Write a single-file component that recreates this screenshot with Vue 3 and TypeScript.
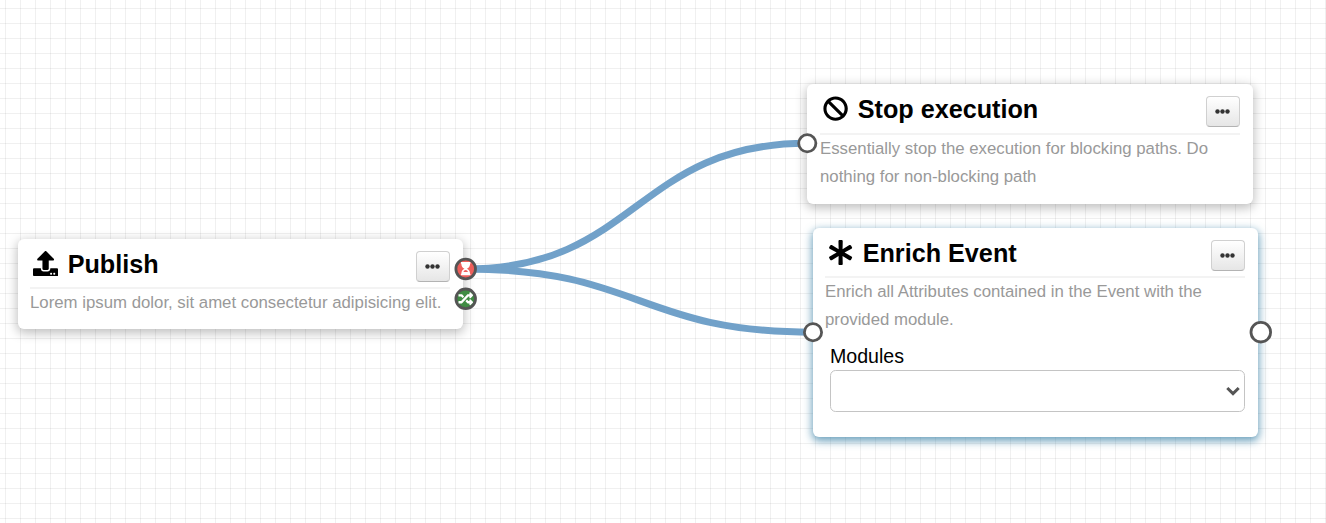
<script setup lang="ts">
interface NodeCard {
  id: string
  title: string
  icon: string
  text: string
  field?: string
}

const nodes: NodeCard[] = [
  {
    id: 'publish',
    title: 'Publish',
    icon: 'M296 384h-80c-13.3 0-24-10.7-24-24V192h-87.7c-17.8 0-26.7-21.5-14.1-34.1L242.3 5.7c7.5-7.5 19.8-7.5 27.3 0l152.2 152.2c12.6 12.6 3.7 34.1-14.1 34.1H320v168c0 13.3-10.7 24-24 24zm216-8v112c0 13.3-10.7 24-24 24H24c-13.3 0-24-10.7-24-24V376c0-13.3 10.7-24 24-24h136v8c0 30.9 25.1 56 56 56h80c30.9 0 56-25.1 56-56v-8h136c13.3 0 24 10.7 24 24zm-124 88c0-11-9-20-20-20s-20 9-20 20 9 20 20 20 20-9 20-20zm64 0c0-11-9-20-20-20s-20 9-20 20 9 20 20 20 20-9 20-20z',
    text: 'Lorem ipsum dolor, sit amet consectetur adipisicing elit.',
  },
  {
    id: 'stop',
    title: 'Stop execution',
    icon: 'M256 8C119.034 8 8 119.033 8 256s111.034 248 248 248 248-111.034 248-248S392.967 8 256 8zm130.108 117.892c65.448 65.448 70 165.481 20.677 235.637L150.47 105.216c70.204-49.356 170.226-44.735 235.638 20.676zM125.892 386.108c-65.448-65.448-70-165.481-20.677-235.637L361.53 406.784c-70.203 49.356-170.226 44.736-235.638-20.676z',
    text: 'Essentially stop the execution for blocking paths. Do nothing for non-blocking path',
  },
  {
    id: 'enrich',
    title: 'Enrich Event',
    icon: 'M478.21 334.093L336 256l142.21-78.093c11.795-6.477 15.961-21.384 9.232-33.037l-19.48-33.741c-6.728-11.653-21.72-15.499-33.227-8.523L296 186.718l3.475-162.204C299.763 11.061 288.937 0 275.48 0h-38.96c-13.456 0-24.283 11.061-23.994 24.514L216 186.718 77.265 102.607c-11.506-6.976-26.499-3.13-33.227 8.523l-19.48 33.741c-6.728 11.653-2.562 26.56 9.233 33.037L176 256 33.79 334.093c-11.795 6.477-15.961 21.384-9.232 33.037l19.48 33.741c6.728 11.653 21.721 15.499 33.227 8.523L216 325.282l-3.475 162.204C212.237 500.939 223.064 512 236.52 512h38.961c13.456 0 24.283-11.061 23.995-24.514L296 325.282l138.735 84.111c11.506 6.976 26.499 3.13 33.227-8.523l19.48-33.741c6.728-11.653 2.563-26.559-9.232-33.036z',
    text: 'Enrich all Attributes contained in the Event with the provided module.',
    field: 'Modules',
  },
]
</script>

<template>
  <div class="canvas">
    <svg class="links" width="1326" height="523">
      <path d="M466 269C636.5 269 636.5 143.300 807 143.300" />
      <path d="M466 269C639.5 269 639.5 332.200 813 332.200" />
    </svg>

    <section v-for="n in nodes" :key="n.id" class="node" :class="n.id">
      <header>
        <svg class="icon" viewBox="0 0 512 512"><path :d="n.icon" /></svg>
        <strong>{{ n.title }}</strong>
        <button type="button" aria-label="Options">
          <svg viewBox="0 0 15 5"><circle cx="2.500" cy="2.500" r="2.200" /><circle cx="7.500" cy="2.500" r="2.200" /><circle cx="12.500" cy="2.500" r="2.200" /></svg>
        </button>
      </header>
      <p>{{ n.text }}</p>
      <div v-if="n.field" class="field">
        <label>{{ n.field }}</label>
        <div class="select">
          <svg viewBox="0 0 14 10"><path d="M1.300 2 7 7.600 12.700 2" /></svg>
        </div>
      </div>
    </section>

    <svg class="ports" width="1326" height="523">
      <circle cx="807.300" cy="143.300" r="8.600" />
      <circle cx="813" cy="332.200" r="8.600" />
      <circle cx="1260.800" cy="332.200" r="9.800" />
      <circle class="red" cx="465.700" cy="269" r="9.800" />
      <circle class="green" cx="465.700" cy="298.800" r="9.800" />
      <svg x="460.700" y="262.100" width="10" height="13.300" viewBox="0 0 384 512">
        <path class="glyph" fill-rule="evenodd" d="M24 0h336q24 0 24 24v16q0 24-24 24c0 91-51 167-121 192 70 25 121 101 121 192q24 0 24 24v16q0 24-24 24H24q-24 0-24-24v-16q0-24 24-24c0-91 51-167 121-192C75 231 24 155 24 64Q0 64 0 40V24Q0 0 24 0zm257 384c-18-49-52-80-89-80s-71 31-89 80z" />
      </svg>
      <svg x="458.300" y="291.400" width="14.800" height="14.800" viewBox="0 0 512 512">
        <path class="glyph" d="M504.971 359.029c9.373 9.373 9.373 24.569 0 33.941l-80 79.984c-15.01 15.01-40.971 4.49-40.971-16.971V416h-58.785a12 12 0 0 1-8.773-3.812l-70.556-75.596 53.333-57.143L352 336h32v-39.981c0-21.438 25.943-31.998 40.971-16.971zM12 176h84l52.781 56.551 53.333-57.143-70.556-75.596A12 12 0 0 0 122.785 96H12c-6.627 0-12 5.373-12 12v56c0 6.627 5.373 12 12 12zm372 0v39.984c0 21.46 25.961 31.98 40.971 16.971l80-79.984c9.373-9.373 9.373-24.569 0-33.941l-80-79.981C409.943 24.021 384 34.582 384 56.019V96h-58.785a12 12 0 0 0-8.773 3.812L96 336H12c-6.627 0-12 5.373-12 12v56c0 6.627 5.373 12 12 12h110.785a12 12 0 0 0 8.773-3.812L352 176z" />
      </svg>
    </svg>
  </div>
</template>

<style>
body {
  margin: 0;
}
</style>

<style scoped>
.canvas {
  position: relative;
  width: 1326px;
  height: 523px;
  overflow: hidden;
  background-color: #fff;
  background-image:
    linear-gradient(to right, rgba(0, 0, 0, 0.06) 1px, transparent 1px),
    linear-gradient(to bottom, rgba(0, 0, 0, 0.06) 1px, transparent 1px);
  background-size: 15px 15px;
  background-position: 5px 8px;
  font-family: "Liberation Sans", Arial, sans-serif;
}
.links,
.ports {
  position: absolute;
  inset: 0;
}
.links path {
  fill: none;
  stroke: #71a1c9;
  stroke-width: 7;
}
.ports circle {
  fill: #fff;
  stroke: #555;
  stroke-width: 2.8;
}
.ports .red {
  fill: #ee5f5b;
}
.ports .green {
  fill: #3f8c43;
}
.glyph {
  fill: #fff;
}
.node {
  position: absolute;
  box-sizing: border-box;
  width: 445.500px;
  padding: 12px 13px 0 12.500px;
  border-radius: 6px;
  background: #fff;
  box-shadow: 0 3px 11px 1px rgba(0, 0, 0, 0.26);
}
.publish {
  left: 17.500px;
  top: 239px;
  height: 90px;
}
.stop {
  left: 807px;
  top: 84px;
  height: 119.500px;
  padding-left: 13px;
}
.enrich {
  left: 812.500px;
  top: 228px;
  height: 209px;
  box-shadow: 0 3px 9px 1px rgba(58, 128, 166, 0.75);
}
header {
  display: flex;
  align-items: flex-start;
  box-sizing: border-box;
  height: 38px;
  padding-left: 3px;
  border-bottom: 2px solid #f3f3f3;
  color: #000;
}
.stop header {
  height: 39px;
}
.icon {
  width: 25.200px;
  height: 25.200px;
  margin-right: 9.500px;
}
strong {
  flex: 1;
  margin-top: -1px;
  font-size: 25.200px;
  line-height: 28px;
}
button {
  display: flex;
  align-items: center;
  justify-content: center;
  box-sizing: border-box;
  width: 34px;
  height: 30.500px;
  padding: 0;
  border: 1.400px solid #d0d0d0;
  border-bottom-color: #b3b3b3;
  border-radius: 4px;
  background: linear-gradient(#fff, #e6e6e6);
}
button svg {
  flex: none;
  width: 15px;
  height: 5px;
  margin-right: 1px;
  fill: #333;
}
p {
  margin: 0;
  font-size: 16.800px;
  line-height: 28px;
  color: #999;
}
.field {
  padding: 8px 0 0 5px;
}
label {
  display: block;
  font-size: 19.600px;
  line-height: 28px;
  color: #000;
}
.select {
  display: flex;
  align-items: center;
  justify-content: flex-end;
  box-sizing: border-box;
  width: 415px;
  height: 41.500px;
  padding-right: 4px;
  border: 1.400px solid #c4c4c4;
  border-radius: 5.600px;
}
.select svg {
  width: 14px;
  height: 10px;
  fill: none;
  stroke: #555;
  stroke-width: 3;
}
</style>
